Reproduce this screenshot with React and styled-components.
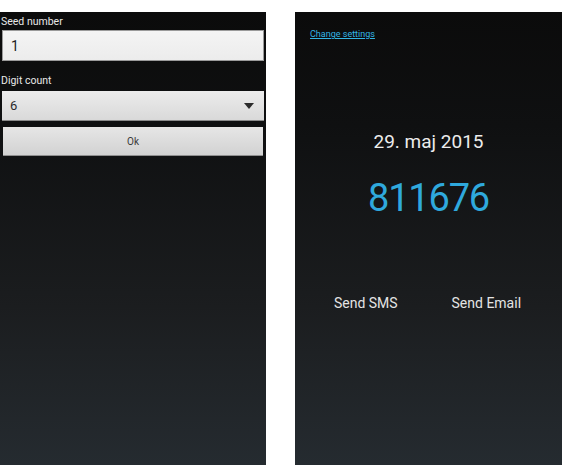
import styled, { createGlobalStyle } from 'styled-components';

const GlobalStyle = createGlobalStyle`
  body {
    margin: 0;
    background: #ffffff;
    font-family: Roboto, "Liberation Sans", sans-serif;
  }
`;

const Screens = styled.div`
  display: flex;
  gap: 29px;
  padding-top: 12px;
`;

const Phone = styled.div`
  width: ${({ $width }) => $width}px;
  height: 453px;
  display: flex;
  flex-direction: column;
  background: linear-gradient(180deg, #0b0b0b 0%, #0f1011 25%, #1b1d1f 65%, #252b30 100%);
`;

const Settings = styled(Phone)`
  padding: 0 2px;
  box-sizing: border-box;
`;

const Label = styled.div`
  height: 15px;
  margin-top: ${({ $top }) => $top}px;
  margin-left: -1px;
  font-size: 10.5px;
  line-height: 15px;
  color: #e8e8e8;
`;

const TextField = styled.div`
  height: 31px;
  margin-top: 1px;
  box-sizing: border-box;
  padding-left: 8px;
  display: flex;
  align-items: center;
  border: 1px solid #9a9a9a;
  background: linear-gradient(180deg, #f4f4f4 0%, #ececec 100%);
  font-size: 14px;
  color: #222222;
`;

const Spinner = styled.div`
  height: 30px;
  margin-top: 3px;
  box-sizing: border-box;
  padding: 0 10px 0 8px;
  display: flex;
  align-items: center;
  justify-content: space-between;
  border-bottom: 1px solid #8a8a8a;
  background: linear-gradient(180deg, #ececec 0%, #d9d9d9 100%);
  font-size: 13px;
  color: #2a2a2a;
`;

const Arrow = styled.span`
  width: 0;
  height: 0;
  border-left: 5px solid transparent;
  border-right: 5px solid transparent;
  border-top: 6px solid #2b2b2b;
`;

const OkButton = styled.div`
  height: 29px;
  margin: 6px 1px 0;
  box-sizing: border-box;
  display: flex;
  align-items: center;
  justify-content: center;
  border-bottom: 1px solid #8f8f8f;
  background: linear-gradient(180deg, #e6e6e6 0%, #d2d2d2 100%);
  font-size: 10px;
  color: #3a3a3a;
`;

const Result = styled(Phone)`
  align-items: center;
`;

const SettingsLink = styled.a`
  align-self: flex-start;
  margin: 16px 0 0 15px;
  font-size: 9px;
  line-height: 12px;
  color: #33b5e5;
  text-decoration: underline;
`;

const DateText = styled.div`
  margin-top: 90px;
  font-size: 19px;
  line-height: 24px;
  color: #ececec;
`;

const Code = styled.div`
  margin-top: 22px;
  font-size: 38px;
  line-height: 44px;
  letter-spacing: -1.2px;
  color: #2fa9dd;
`;

const Actions = styled.div`
  width: 100%;
  margin-top: 75px;
  display: flex;
  justify-content: space-around;
  padding: 0 14px 0 12px;
  box-sizing: border-box;
`;

const Action = styled.div`
  font-size: 14px;
  color: #e4e4e4;
`;

export default function App() {
  return (
    <>
      <GlobalStyle />
      <Screens>
        <Settings $width={266}>
          <Label $top={2}>Seed number</Label>
          <TextField>1</TextField>
          <Label $top={12}>Digit count</Label>
          <Spinner>
            6
            <Arrow />
          </Spinner>
          <OkButton>Ok</OkButton>
        </Settings>
        <Result $width={267}>
          <SettingsLink href="#">Change settings</SettingsLink>
          <DateText>29. maj 2015</DateText>
          <Code>811676</Code>
          <Actions>
            <Action>Send SMS</Action>
            <Action>Send Email</Action>
          </Actions>
        </Result>
      </Screens>
    </>
  );
}
